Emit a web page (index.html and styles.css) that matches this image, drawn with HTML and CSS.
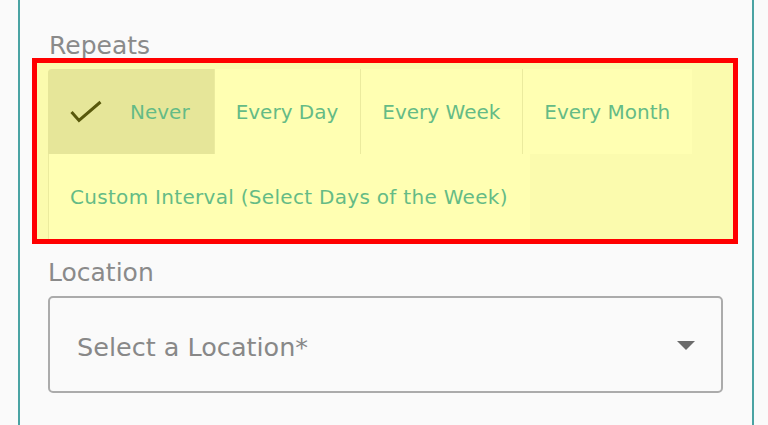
FILE: index.html
```html
<!DOCTYPE html>
<html lang="en">
<head>
<meta charset="utf-8">
<title>Repeats</title>
<link rel="stylesheet" href="styles.css">
</head>
<body>
<div class="panel">
  <div class="field-label repeats-label">Repeats</div>
  <div class="toggle-group">
    <button class="toggle selected" type="button">
      <svg class="check" width="32" height="24" viewBox="0 0 32 24" aria-hidden="true"><path d="M1.5 12 L9 20.5 L30.5 2" fill="none" stroke="#111" stroke-width="3" stroke-linecap="butt" stroke-linejoin="miter"/></svg>
      <span>Never</span>
    </button>
    <button class="toggle" type="button">Every Day</button>
    <button class="toggle" type="button">Every Week</button>
    <button class="toggle" type="button">Every Month</button>
    <button class="toggle wide" type="button">Custom Interval (Select Days of the Week)</button>
    <div class="highlight"></div>
  </div>
  <div class="field-label location-label">Location</div>
  <div class="select">
    <span class="placeholder">Select a Location*</span>
    <span class="caret"></span>
  </div>
</div>
</body>
</html>
```
FILE: styles.css
```css
html, body {
  margin: 0;
  padding: 0;
  background: #fafafa;
  font-family: "DejaVu Sans", "Liberation Sans", sans-serif;
  overflow: hidden;
}

.panel {
  margin-left: 18px;
  width: 736px;
  box-sizing: border-box;
  min-height: 440px;
  border-left: 2px solid #4aa3a3;
  border-right: 2px solid #4aa3a3;
  padding: 31px 29px 0 28px;
}

.field-label {
  font-size: 25px;
  line-height: 29px;
  color: #8a8a8a;
}

.repeats-label {
  margin-left: 1px;
}

.toggle-group {
  position: relative;
  margin-top: 9px;
  display: flex;
  flex-wrap: wrap;
  align-items: stretch;
}

.toggle {
  display: flex;
  align-items: center;
  height: 85px;
  box-sizing: border-box;
  margin: 0;
  padding: 0 22px 0 21px;
  border: none;
  border-left: 1px solid #e2e2e2;
  background: #ffffff;
  color: #229ec0;
  font-family: inherit;
  font-size: 20px;
  white-space: nowrap;
}

.toggle.wide {
  letter-spacing: 0.3px;
}

.toggle.selected {
  background: #dcdcdc;
  border-left-color: #dcdcdc;
  border-top-left-radius: 4px;
  padding-right: 24px;
}

.check {
  margin-right: 28px;
  flex: none;
}

.highlight {
  position: absolute;
  top: -11px;
  left: -16px;
  right: -15px;
  bottom: -5px;
  border: 5px solid #ff0000;
  background: rgba(255, 255, 0, 0.3);
  pointer-events: none;
}

.location-label {
  margin-top: 19px;
}

.select {
  margin-top: 9px;
  height: 97px;
  box-sizing: border-box;
  border: 2px solid #ababab;
  border-radius: 5px;
  display: flex;
  align-items: center;
  justify-content: space-between;
  padding: 4px 26px 0 27px;
}

.placeholder {
  font-size: 25.5px;
  color: #888888;
}

.caret {
  width: 0;
  height: 0;
  border-left: 9px solid transparent;
  border-right: 9px solid transparent;
  border-top: 9px solid #6b6b6b;
  margin-top: -2px;
}
```
